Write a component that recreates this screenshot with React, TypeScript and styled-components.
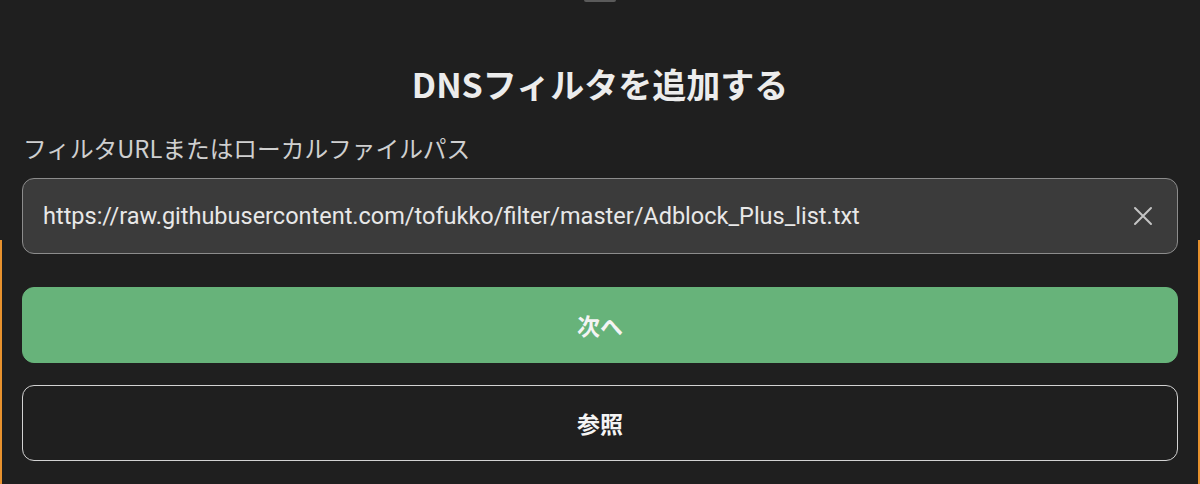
import React, { FC } from "react";
import styled, { createGlobalStyle } from "styled-components";

const GlobalStyle = createGlobalStyle`
  html, body {
    margin: 0;
    padding: 0;
    background: #1f1f1f;
  }
  * {
    box-sizing: border-box;
  }
`;

const Screen = styled.div`
  width: 1200px;
  height: 484px;
  overflow: hidden;
  background-color: #1f1f1f;
  background-image:
    linear-gradient(#e8922e, #e8922e),
    linear-gradient(#e8922e, #e8922e);
  background-size: 2px 244px, 2px 244px;
  background-position: left bottom, right bottom;
  background-repeat: no-repeat;
  font-family: "Roboto", "Noto Sans CJK JP", sans-serif;
`;

const Sheet = styled.div`
  display: flex;
  flex-direction: column;
  align-items: stretch;
  padding: 0 22px;
`;

const Handle = styled.div`
  align-self: center;
  width: 32px;
  height: 2px;
  border-radius: 0 0 2px 2px;
  background: #5a5a5a;
`;

const Title = styled.h2`
  margin: 61px 0 0;
  text-align: center;
  font-family: "Noto Sans CJK JP", sans-serif;
  font-size: 34px;
  line-height: 42px;
  font-weight: 700;
  color: #ececec;
`;

const Label = styled.div`
  margin-top: 28px;
  padding-left: 1px;
  font-family: "Noto Sans CJK JP", sans-serif;
  font-size: 23.7px;
  line-height: 30px;
  color: #cfcfcf;
`;

const InputBox = styled.div`
  margin-top: 15px;
  height: 76px;
  display: flex;
  align-items: center;
  padding: 0 24px 0 20px;
  background: #3b3b3b;
  border: 1px solid #8c8c8c;
  border-radius: 12px;
`;

const InputText = styled.div`
  flex: 1;
  font-family: "Roboto", sans-serif;
  font-size: 23.5px;
  color: #e8e8e8;
  white-space: nowrap;
  overflow: hidden;
`;

const ClearIcon = styled.svg`
  width: 20px;
  height: 20px;
  flex: none;
`;

const Button = styled.button<{ $primary?: boolean }>`
  height: 76px;
  width: 100%;
  border-radius: 12px;
  border: 1px solid ${(p) => (p.$primary ? "#67b37a" : "#d2d2d2")};
  background: ${(p) => (p.$primary ? "#67b37a" : "transparent")};
  color: #f4f4f4;
  font-family: "Noto Sans CJK JP", sans-serif;
  font-size: 23px;
  font-weight: 700;
  cursor: pointer;
`;

const Actions = styled.div`
  display: flex;
  flex-direction: column;
  gap: 22px;
  margin-top: 33px;
`;

const App: FC = () => {
  return (
    <>
      <GlobalStyle />
      <Screen>
        <Sheet>
          <Handle />
          <Title>DNSフィルタを追加する</Title>
          <Label>フィルタURLまたはローカルファイルパス</Label>
          <InputBox>
            <InputText>
              https://raw.githubusercontent.com/tofukko/filter/master/Adblock_Plus_list.txt
            </InputText>
            <ClearIcon viewBox="0 0 20 20">
              <path d="M2 2 L18 18 M18 2 L2 18" stroke="#c4c4c4" strokeWidth="2" strokeLinecap="round" />
            </ClearIcon>
          </InputBox>
          <Actions>
            <Button $primary>次へ</Button>
            <Button>参照</Button>
          </Actions>
        </Sheet>
      </Screen>
    </>
  );
};

export default App;
